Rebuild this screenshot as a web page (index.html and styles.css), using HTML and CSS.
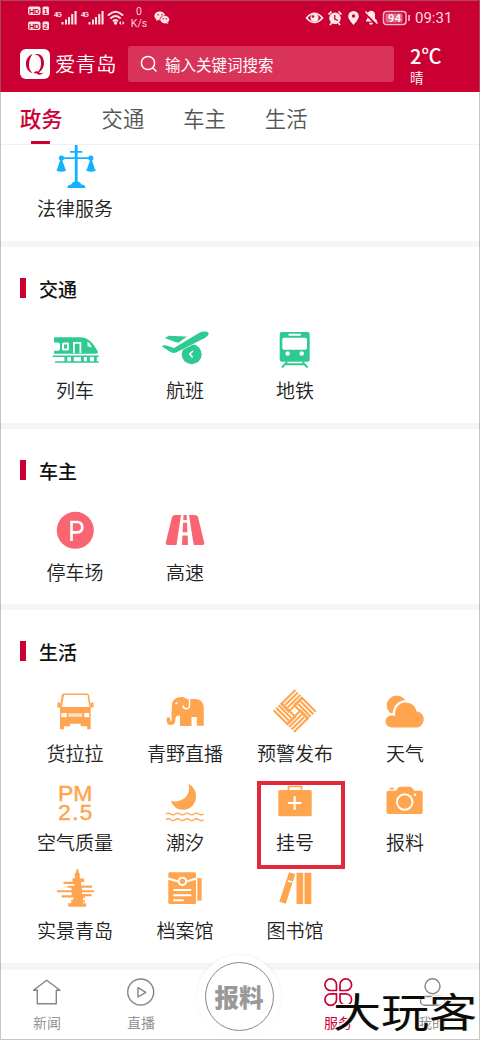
FILE: index.html
```html
<!DOCTYPE html>
<html lang="zh-CN">
<head>
<meta charset="utf-8">
<title>爱青岛</title>
<link rel="stylesheet" href="styles.css">
</head>
<body>
<div class="app">
  <header class="header">
    <div class="status">
      <svg class="signals" width="98" height="24" viewBox="28 6 98 24" fill="#fbe3e8">
        <rect x="28" y="6.5" width="12.5" height="8.5" rx="2"/><rect x="42.5" y="6.5" width="6.5" height="8.5" rx="1.5"/>
        <rect x="28" y="21.5" width="12.5" height="8.5" rx="2"/><rect x="42.5" y="21.5" width="6.5" height="8.5" rx="1.5"/>
        <g class="badge-text"><text x="29" y="13.6" textLength="10.5">HD</text><text x="43.6" y="13.6">1</text><text x="29" y="28.6" textLength="10.5">HD</text><text x="43.6" y="28.6">2</text></g>
        <g class="gen-text"><text x="54" y="17" textLength="8">4G</text><text x="81" y="17" textLength="8">4G</text></g>
        <g id="bars"><rect x="61.5" y="22" width="2" height="2.5"/><rect x="65" y="19.5" width="2" height="5"/><rect x="68" y="17" width="2" height="7.5"/><rect x="71.2" y="14" width="2.1" height="10.5"/><rect x="74.5" y="11" width="2.1" height="13.5"/></g>
        <use href="#bars" x="27"/>
        <g fill="none" stroke="#fbe3e8" stroke-width="1.9" stroke-linecap="round"><path d="M108.5 15q7-6.500 14 0M111 18q4.500-4 9 0"/><path d="M113.500 20.800q2-1.600 4 0"/></g><circle cx="115.500" cy="23" r="1.700"/><path d="M119 23l2-2v4zM124.500 23l-2-2v4z"/>
      </svg>
      <div class="speed"><span>0</span><span>K/s</span></div>
      <svg class="chat" width="16" height="14" viewBox="0 0 16 14"><path fill="#fbe3e8" d="M6 .5C2.700.5.400 2.500.400 5c0 1.500.8 2.700 2 3.500L2 10l2-1c.5.200 1 .200 1.600.2C5.500 6.500 7.500 4.600 11 4.500 10.500 2 8.500.500 6 .500z"/><ellipse cx="10.800" cy="8.600" rx="4.500" ry="3.800" fill="#fbe3e8"/><path d="M13 11l1.500 2-3-1z" fill="#fbe3e8"/><g fill="#cb0032"><circle cx="4.200" cy="3.800" r=".8"/><circle cx="8" cy="3.800" r=".8"/><circle cx="9.300" cy="7.700" r=".7"/><circle cx="12.300" cy="7.700" r=".7"/></g></svg>
      <svg class="alerts" width="106" height="20" viewBox="305 8 106 20">
        <path d="M306.500 18q8-9.500 16 0q-8 9-16 0z" fill="none" stroke="#fde8ec" stroke-width="1.700"/><circle cx="314.500" cy="17.700" r="4" fill="#fde8ec"/><circle cx="313" cy="16.500" r="1.300" fill="#cb0032"/>
        <circle cx="335" cy="18.300" r="5.800" fill="#fde8ec"/><path d="M328.500 14.500l3-3M341.500 14.500l-3-3M331.500 23l-1.500 2M338.500 23l1.500 2" stroke="#fde8ec" stroke-width="1.700"/><path d="M334.800 15v4l3 1.500" fill="none" stroke="#cb0032" stroke-width="1.300"/>
        <path d="M353.500 11a5.300 5.300 0 0 1 5.300 5.300c0 3.500-5.300 8.700-5.300 8.700s-5.300-5.200-5.300-8.700a5.300 5.300 0 0 1 5.300-5.300z" fill="#fde8ec"/><circle cx="353.500" cy="16" r="1.700" fill="#cb0032"/>
        <path d="M366 21.500v-1l1.500-2v-4c0-5 7.500-5 7.500 0v4l2 2v1zM369 22.800h4c-.5 2.500-3.500 2.500-4 0z" fill="#fde8ec"/><path d="M364 12.500l12.500 12" stroke="#cb0032" stroke-width="2"/><path d="M365.500 11.500l12 12" stroke="#fde8ec" stroke-width="1.500"/>
        <rect x="383.500" y="11.500" width="22.500" height="13" rx="3" fill="none" stroke="#f5b5c4" stroke-width="1.500"/><rect x="385.500" y="13.500" width="17" height="9" rx="1" fill="#df6e88"/><path d="M409 15v6" stroke="#f5b5c4" stroke-width="1.800"/><text class="battery-text" x="388" y="22" textLength="13">94</text>
      </svg>
      <span class="clock">09:31</span>
    </div>
    <div class="topbar">
      <svg class="logo" width="30" height="30" viewBox="0 0 30 30"><rect width="30" height="30" rx="6" fill="#fff"/><path d="M12.500 5C8 7 5.500 11 6 16c.4 4 3 7.500 6.500 8-2-2-3.500-4-3.500-8 0-4.500 1.500-8.500 3.500-11zM14 5.500c5-2 10 1 10 8.500 0 4-2 7.500-5 9.500 1.500 1 3 .8 4.500-.2-1.500 3-4.500 3-7 1.200-1-.7-2-.7-3 .2 1-2.500 2.700-3 4.500-2 2-2 3-5 3-8.700 0-5-2-8.500-7-8.500z" fill="#cb0032"/></svg>
      <span class="brand">爱青岛</span>
      <div class="search">
        <svg width="18" height="18" viewBox="0 0 18 18" fill="none" stroke="#fff" stroke-width="1.500" stroke-linecap="round"><circle cx="8" cy="8" r="6.600"/><path d="M13 13l3 3"/></svg>
        <span>输入关键词搜索</span>
      </div>
      <div class="weather"><span class="temp">2℃</span><span class="sky">晴</span></div>
    </div>
  </header>

  <nav class="tabs"><span class="tab active">政务</span><span class="tab">交通</span><span class="tab">车主</span><span class="tab">生活</span></nav>

  <main>
    <section class="section first">
      <div class="grid">
        <div class="item blue"><svg class="icon" viewBox="0 0 50 50"><path d="M24.800 2h2.800v37h-2.800zM20 8h12.300v1.800H20zM11 14.200h30v1.900H11zM17.300 45c.2-2.500 1.500-3.500 4-3.500 1-2.500 3-3 5-3s4 .5 5 3c2.500 0 4 1 4.200 3.500z"/><circle cx="11.500" cy="15" r="2.600"/><circle cx="40.800" cy="15" r="2.600"/><path d="M11 15l-4 11.500h-.7c0 3 10 3 10 0h-.8L11.500 15zM40.800 15l-4 11.500H36c0 3 10 3 10 0h-.9L41.200 15z"/></svg><span>法律服务</span></div>
      </div>
    </section>

    <section class="section">
      <h2 class="title">交通</h2>
      <div class="grid">
        <div class="item green"><svg class="icon" viewBox="0 0 50 50"><path fill-rule="evenodd" d="M4 13.300h26c9 0 14 7 17.700 14.300.5 1.400-.3 2.200-2 2.200H4v-3h3.500c1.700 0 2.500-.8 2.500-2.300v-3.800c0-1.500-1-2.300-2.500-2.300H4zM13.500 18.500q-1.500 0-1.500 1.500v5q0 1.500 1.500 1.500h4q1.500 0 1.500-1.500v-5q0-1.500-1.500-1.500zM14 20.500h3v4h-3zM23 18v11h1.800v-9.200h4.700V29h1.800V18zM37.500 17.500v4.800l4.500 1.200q-1.500-4-4.500-6z"/><path d="M2.700 31.600h46v1.500h-46zM5 37.200h43.700v1.500H5zM14.500 33h2.800v4.500h-2.800zM21 33h2.800v4.500H21zM31 33h2.800v4.500H31zM37 33h2.800v4.500H37zM44 33h2.800v4.500H44z"/></svg><span>列车</span></div>
        <div class="item green"><svg class="icon" viewBox="0 0 50 50"><circle cx="31.700" cy="30.300" r="10"/><path stroke="#fff" stroke-width="1.200" paint-order="stroke" d="M2 22.500c1-1.700 4-1.500 6-.5l6 2L39 9c3.500-1.700 7.500-1.900 9.300-.5 1.500 2-2 4.800-5 6.300L18 27.500c-2.500 1.700-5 1.800-7 .7z"/><path d="M4.800 14l4-2.300 16.200.8h2l-8.500 6.300-4-1z"/><path d="M33 27l-3.200 3 2.800 3.500" fill="none" stroke="#fff" stroke-width="1.500"/></svg><span>航班</span></div>
        <div class="item green"><svg class="icon" viewBox="0 0 50 50"><path fill-rule="evenodd" d="M12 8h25.500q2.200 0 2.200 2.200v25q0 2.500-2.500 2.500h-25q-2.500 0-2.500-2.500v-25Q9.700 8 12 8zM18.500 9.800v1.900h12.300V9.800zM14 13.700q-1.700 0-1.700 1.700V24q0 1.700 1.700 1.700h21.300Q37 25.700 37 24v-8.600q0-1.700-1.700-1.700z"/><circle cx="17.700" cy="29.500" r="2.200" fill="#fff"/><circle cx="31.700" cy="29.500" r="2.200" fill="#fff"/><path d="M17 38l-5 5.500M32.500 38l5 5.500M15 40.200h20" fill="none" stroke="currentColor" stroke-width="1.900"/></svg><span>地铁</span></div>
      </div>
    </section>

    <section class="section">
      <h2 class="title">车主</h2>
      <div class="grid">
        <div class="item pink"><svg class="icon" viewBox="0 0 50 50"><circle cx="25.300" cy="24.300" r="18.500"/><path d="M21.500 35V16H27q5.300 0 5.300 5.200T27 26.400h-5.500" fill="none" stroke="#fff" stroke-width="2.700"/></svg><span>停车场</span></div>
        <div class="item pink"><svg class="icon" viewBox="0 0 50 50"><path d="M15.500 9H21l-4.500 30H8q-2.700 0-2.200-2.500l6-24.700Q12.500 9 15.500 9zM29 9h5.500q3 0 3.700 2.800l6 24.700q.5 2.500-2.200 2.500h-8.300zM23.500 9h3.200l.2 5h-3.600zM23 16.800h4l.4 9.500h-4.800zM22.400 29.500h5.200L28 39h-6z"/></svg><span>高速</span></div>
      </div>
    </section>

    <section class="section life">
      <h2 class="title">生活</h2>
      <div class="grid">
        <div class="item"><svg class="icon" viewBox="0 0 50 50"><path fill-rule="evenodd" d="M14 6.500h23q2 0 2.200 2l1.500 12v21.800h-3.500v-3H14v3h-4V20.500l1.700-12q.3-2 2.300-2zM14 8l-2.200 12h27.500L37.500 8zM11.300 26v4.300h5.400V26zM34.300 26v4.300h4.900V26zM20 36.700v2.600h10.700v-2.600z"/><path d="M7.500 15.500h3v5h-3zM40.500 15.500h3v5h-3z"/><path d="M18.300 26.300h14v3.500h-14z" fill="#ffe0c4"/></svg><span>货拉拉</span></div>
        <div class="item"><svg class="icon" viewBox="0 0 50 50"><path d="M12 18c0-5 4-8 9.500-8 3 0 4 1.500 6 2.200l8-.2c5 .5 8.300 3.500 8.300 8.500v18.300h-7V30h-5.300v9H20V28.500c-2.500 0-4.700.5-4.700 4.500 0 4.500-2.500 5-5 5-3 0-3.700-3-3.700-6 0-2.300 3.500-2.300 3.600 0 0 1.700.2 2.700.8 2.500 1-.3.500-3 .5-5.500 0-5 .5-6 .5-11z"/><path d="M29.500 11v7.500c0 4.700-6.500 4-6.500 0" fill="none" stroke="#fff" stroke-width="1.400"/><path d="M17.500 15.500l-2 1.500" stroke="#fff" stroke-width="1.500"/></svg><span>青野直播</span></div>
        <div class="item"><svg class="icon" viewBox="0 0 50 50"><g transform="translate(24.700 24) rotate(45)"><g id="arm" fill="none" stroke="currentColor" stroke-width="2.100"><path d="M-14.400 5.500v-20.900M-10.900 2.500v-17.900M-7.400 2.500v-17.900M-14.400 4.500h10.600v-19.900"/></g><use href="#arm" transform="rotate(90)"/><use href="#arm" transform="rotate(180)"/><use href="#arm" transform="rotate(270)"/></g></svg><span>预警发布</span></div>
        <div class="item"><svg class="icon" viewBox="0 0 50 50"><circle cx="16.700" cy="18.500" r="10"/><path stroke="#fff" stroke-width="4.500" paint-order="stroke" d="M12 40.500a6 6 0 0 1-1-12c1.500-.3 3 0 4 .5C14.500 21 19 15.500 25.500 15.500c6 0 10 3.500 11 9 4.500.3 7.200 3.700 7.200 7.700 0 5-3.500 8.300-7.700 8.300z"/></svg><span>天气</span></div>

        <div class="item"><svg class="icon pm" viewBox="0 0 50 50"><text x="8" y="25" textLength="34.500" lengthAdjust="spacingAndGlyphs">PM</text><text x="8.300" y="44" textLength="34">2.5</text></svg><span>空气质量</span></div>
        <div class="item"><svg class="icon" viewBox="0 0 50 50"><path d="M28.500 8c5 2.500 7.500 7 7.500 12.500 0 7.500-5.500 13.300-12.800 13.300-5.700 0-10.200-3.300-12.500-9 2 .7 5 1 7.500.3 9-2 12.300-9 10.300-17.100z"/><g fill="none" stroke="currentColor" stroke-width="1.400"><path id="wave" d="M6 38q2.350-1.800 4.700 0t4.700 0 4.700 0 4.700 0 4.700 0 4.700 0 4.700 0 4.700 0"/><use href="#wave" y="5.700"/></g></svg><span>潮汐</span></div>
        <div class="item"><svg class="icon" viewBox="0 0 50 50"><rect x="8.300" y="14" width="33.400" height="26.200" rx="1.500"/><path d="M18.500 14.500v-4h13v4" fill="none" stroke="currentColor" stroke-width="1.700"/><path d="M24.700 20.300v13.400M18 27h13.400" stroke="#fff" stroke-width="2.200"/></svg><span>挂号</span></div>
        <div class="item"><svg class="icon" viewBox="0 0 50 50"><path d="M8.500 14.800h7.200l2.600-3.200q.7-.8 1.700-.8h10q1 0 1.700.8l2.600 3.200h6.400q2 0 2 2v19.300q0 2-2 2H8.500q-2 0-2-2V16.800q0-2 2-2zM9.700 11.800h4.200v1.700H9.700z"/><circle cx="24.700" cy="26" r="7.800" fill="none" stroke="#fff" stroke-width="1.900"/><circle cx="35" cy="18.800" r="1.300" fill="#fff"/></svg><span>报料</span></div>

        <div class="item"><svg class="icon" viewBox="0 0 50 50"><path d="M26.600 5h1.500l.8 4h.8v5.500h4.500V18H31v3.500h11v2.300H32v2.500h12v2H32V30h9.500v2.200H35v1.500h-2v2.500h2v2h-2v1h3v3.600H18.300v-3.600h3v-3.500h2V33.500H11.700v-2.200h10V28.300H7v-2h14.500v-2.500h-4v-2h7V20H13.500v-2.200h9v-3.500h2.300V9h1z"/></svg><span>实景青岛</span></div>
        <div class="item"><svg class="icon" viewBox="0 0 50 50"><path d="M9.500 8.300h25q1.500 0 1.500 1.500v3.700l-9 2.700a4.800 4.800 0 0 0-9.200 0l-9.500-2.700V9.800q0-1.500 1.200-1.500zM8.300 15.800l9.500 2.700a4.800 4.800 0 0 0 9.200 0l9-2.700v22.700q0 1.500-1.500 1.500H9.800q-1.500 0-1.500-1.500zM37.300 14h3.200q1.200 0 1.200 1.200v20.300q0 1.200-1.200 1.200h-3.200z"/><circle cx="22.400" cy="17.200" r="2.700"/><path d="M14 26h16.500M14 31.200h16.500M14 36.300h9" stroke="#fff" stroke-width="1.900" stroke-linecap="round"/></svg><span>档案馆</span></div>
        <div class="item"><svg class="icon" viewBox="0 0 50 50"><path d="M19 8.300l6.300 1.700-9.500 29.700-6.500-2zM26.500 8.700h6.700v31.400h-6.700zM34.500 8.700h6.800v31.400h-6.800z"/><path d="M18 16.800l4 1.200" stroke="#fff" stroke-width="1.800"/></svg><span>图书馆</span></div>
      </div>
      <div class="highlight"></div>
    </section>
  </main>

  <footer class="bottom">
    <div class="nav"><svg viewBox="0 0 32 32"><path d="M15.700 4.300L2.500 14.200h3.800v13.500h19V14.200H29z"/></svg><span>新闻</span></div>
    <div class="nav"><svg viewBox="0 0 32 32"><circle cx="15.700" cy="16" r="13"/><path d="M13 11.700v9.300l7.800-4.700z"/></svg><span>直播</span></div>
    <div class="nav center"><div class="disc"><div class="ring">报料</div></div></div>
    <div class="nav on"><svg viewBox="0 0 32 32"><path d="M14.500 14.500H8.700A5.800 5.800 0 1 1 14.500 8.700zM18 14.500V8.700a5.800 5.800 0 1 1 5.800 5.800zM14.500 17.800v5.800a5.800 5.800 0 1 1-5.800-5.800zM18 17.800h5.800A5.800 5.800 0 1 1 18 23.600z"/></svg><span>服务</span></div>
    <div class="nav"><svg viewBox="0 0 32 32"><circle cx="16.500" cy="10.200" r="7.500"/><rect x="4.500" y="20.500" width="24.500" height="8.700" rx="4.300"/></svg><span>我的</span></div>
    <div class="watermark">大玩客</div>
  </footer>
</div>
</body>
</html>
```
FILE: styles.css
```css
* { box-sizing: border-box; }
body { margin: 0; background: #fff; font-family: "Noto Sans CJK SC", sans-serif; }
.app { position: relative; width: 480px; height: 1040px; overflow: hidden; display: flex; flex-direction: column; }
.app::after { content: ""; position: absolute; inset: 0; border: 1px solid rgba(140, 140, 140, .5); pointer-events: none; }
svg { display: block; flex: none; }

.header { height: 92px; background: #cb0032; color: #fff; flex: none; }
.status { height: 40px; padding: 6px 28px 0 28px; display: flex; align-items: flex-start; }
.badge-text { font: bold 7.5px "Liberation Sans", sans-serif; fill: #cb0032; }
.gen-text { font: bold 7px "Liberation Sans", sans-serif; }
.speed { width: 26px; display: flex; flex-direction: column; align-items: center; font: 10.5px/12px Roboto, sans-serif; color: #f8d0d9; }
.chat { margin: 5px 0 0 2px; }
.alerts { margin: 2px 0 0 auto; }
.battery-text { font: 500 11px Roboto, sans-serif; fill: #fff; }
.clock { width: 37px; margin-left: 4px; font: 15px/24px Roboto, sans-serif; color: #f9d9e0; white-space: nowrap; }
.topbar { display: flex; align-items: flex-start; padding-left: 20px; height: 52px; }
.logo { margin-top: 9px; }
.brand { width: 73px; margin: 8px 0 0 5px; font-size: 20.5px; line-height: 30px; font-weight: 350; white-space: nowrap; }
.search { width: 266px; height: 36px; margin-top: 6px; border-radius: 3px; background: #d93359; display: flex; align-items: center; gap: 7px; padding-left: 12px; font-size: 15.500px; }
.weather { display: flex; flex-direction: column; margin: 3px 0 0 16px; }
.temp { font-size: 20px; line-height: 25px; font-weight: 500; }
.sky { font-size: 13.5px; line-height: 18px; font-weight: 350; }

.tabs { height: 53px; padding-left: 20px; display: flex; gap: 39px; border-bottom: 1px solid #f1f1f1; flex: none; }
.tab { font-size: 21.300px; line-height: 52px; font-weight: 350; color: #555; height: 52px; }
.tab.active { color: #cb0032; font-weight: 500; position: relative; }
.tab.active::after { content: ""; position: absolute; left: 11px; bottom: 0; width: 19px; height: 3px; background: #cb0032; }

.section { height: 181.670px; border-bottom: 6px solid #f5f5f5; padding: 31px 20px 0; }
.section.first { display: flow-root; height: 102px; padding-top: 0; }
.first .grid { margin-top: -2px; }
.first .item { gap: 0; }
.title { margin: 0 0 26px; height: 20px; border-left: 6px solid #cb0032; padding-left: 13px; font-size: 19px; line-height: 22px; font-weight: 500; color: #111; }
.grid { display: grid; grid-template-columns: repeat(4, 110px); grid-auto-rows: 88.500px; }
.item { display: flex; flex-direction: column; align-items: center; gap: 1px; color: #ffa54f; }
.item span { font-size: 19px; line-height: 30px; font-weight: 350; color: #222; white-space: nowrap; }
.icon { width: 50px; height: 50px; fill: currentColor; }
.blue { color: #12b2ff; }
.green { color: #2fca92; }
.pink { color: #f96672; }
.pm text { font: 22.500px "Liberation Sans", sans-serif; stroke: currentColor; stroke-width: .5px; }
.life { position: relative; height: 359.500px; border-bottom-width: 7px; }
.highlight { position: absolute; left: 257px; top: 171px; width: 88px; height: 88px; border: 4px solid #e3283c; }

.bottom { position: relative; height: 70px; display: grid; grid-template-columns: 94px 94px 102px 96px 92px; background: #fff; flex: none; }
.nav { display: flex; flex-direction: column; align-items: center; padding-top: 6px; color: #8a8a8a; font-size: 14px; font-weight: 350; }
.nav svg { width: 32px; height: 32px; fill: none; stroke: #858585; stroke-width: 1.400; stroke-linejoin: round; }
.nav span { line-height: 20px; margin-top: 4px; }
.nav.on { color: #cb0032; font-weight: 400; }
.nav.on svg { stroke: #cb0032; stroke-width: 1.700; }
.center { padding-top: 0; }
.disc { width: 84px; height: 84px; margin-top: -15px; border-radius: 50%; background: #fff; box-shadow: 0 -1px 3px rgba(0, 0, 0, .06); display: grid; place-items: center; flex: none; }
.ring { width: 69px; height: 69px; border: 1.500px solid #888; border-radius: 50%; display: grid; place-items: center; font-size: 24.500px; line-height: 30px; font-weight: 900; color: #999; }
.watermark { position: absolute; left: 333px; top: 15px; font-size: 48px; line-height: 48px; font-weight: 400; color: #0b0b0b; white-space: nowrap; transform: scaleY(.84); text-shadow: 0 0 1px #fff8d8, 1px 1px 0 #e8e2c8, -1px -1px 0 #fff; }
```
